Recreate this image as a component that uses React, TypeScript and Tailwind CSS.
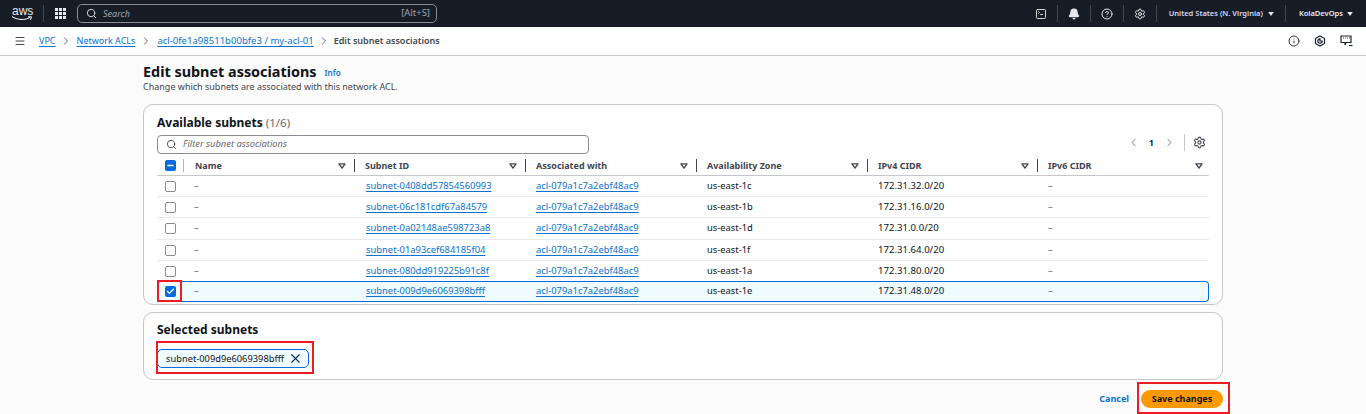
import React from "react";
import { Search, Bell, Settings, CircleHelp, SquareTerminal, Menu, ChevronRight, ChevronLeft, Info, X, Check, Minus } from "lucide-react";

const rows = [
  ["subnet-0408dd57854560993", "us-east-1c", "172.31.32.0/20"],
  ["subnet-06c181cdf67a84579", "us-east-1b", "172.31.16.0/20"],
  ["subnet-0a02148ae598723a8", "us-east-1d", "172.31.0.0/20"],
  ["subnet-01a93cef684185f04", "us-east-1f", "172.31.64.0/20"],
  ["subnet-080dd919225b91c8f", "us-east-1a", "172.31.80.0/20"],
  ["subnet-009d9e6069398bfff", "us-east-1e", "172.31.48.0/20"],
];
const heads = ["Name", "Subnet ID", "Associated with", "Availability Zone", "IPv4 CIDR", "IPv6 CIDR"];
const GRID = "grid grid-cols-[28px_170px_171px_171px_171px_170px_171px]";

const Caret = ({ c = "#424650" }: { c?: string }) => (
  <svg width="8" height="6" viewBox="0 0 9 7"><path d="M1 1h7L4.500 6z" fill="none" stroke={c} strokeWidth="1.600" strokeLinejoin="round" /></svg>
);
const Solid = () => (
  <svg width="6" height="4" viewBox="0 0 7 5"><path d="M0 0h7L3.500 5z" fill="#e8e9ec" /></svg>
);
const TopSep = () => <div className="w-px h-[17px] bg-[#424650]" />;
const Lnk = ({ children }: { children: React.ReactNode }) => (
  <span className="text-[#0972d3] underline underline-offset-2 decoration-1">{children}</span>
);

function Cb({ state }: { state?: "on" | "mixed" }) {
  if (!state) return <div className="w-[11px] h-[11px] rounded-[2px] border border-[#8c8c94] bg-white" />;
  return (
    <div className="w-[11px] h-[11px] rounded-[2px] bg-[#006ce0] flex items-center justify-center">
      {state === "on" ? <Check size={9} strokeWidth={3.500} color="#fff" /> : <Minus size={9} strokeWidth={3.500} color="#fff" />}
    </div>
  );
}

export default function App() {
  return (
    <div className="relative w-[1366px] h-[414px] overflow-hidden bg-[#fbfbfb] text-[#0f141a] text-[9px] font-['Noto_Sans',sans-serif]">
      <header className="h-[27px] bg-[#161d26] flex items-center text-[#e8e9ec]">
        <div className="w-[43px] pl-[11px] flex flex-col items-start leading-none">
          <span className="text-[12px] font-medium leading-[10px] font-['Liberation_Sans',sans-serif] pl-px">aws</span>
          <svg width="22" height="5" viewBox="0 0 22 5"><path d="M1 0.500C6 4 14 4.500 19 1.500M17 0.800L20.500 0.800L19.500 3.800" fill="none" stroke="#fff" strokeWidth="1" /></svg>
        </div>
        <div className="w-px h-[17px] bg-[#424650]" />
        <div className="ml-[11px] grid grid-cols-3 gap-px w-[11px]">
          {Array.from({ length: 9 }).map((_, i) => <div key={i} className="w-[3px] h-[3px] bg-[#e8e9ec]" />)}
        </div>
        <div className="ml-[11px] w-[360px] h-[19px] rounded-[5px] border border-[#8c8c94] flex items-center pl-[8px] pr-[6px]">
          <Search size={11} strokeWidth={2} color="#e8e9ec" />
          <span className="ml-[6px] italic text-[#a4a4ad]">Search</span>
          <span className="ml-auto text-[#a4a4ad] text-[9.500px]">[Alt+S]</span>
        </div>
        <div className="ml-auto flex items-center">
          <SquareTerminal size={12} strokeWidth={1.800} />
          <div className="mx-[10px]"><TopSep /></div>
          <Bell size={12} strokeWidth={2.500} fill="#e8e9ec" />
          <div className="mx-[10px]"><TopSep /></div>
          <CircleHelp size={12} strokeWidth={2} />
          <div className="mx-[10px]"><TopSep /></div>
          <Settings size={12} strokeWidth={2} />
          <div className="ml-[10px] mr-[12px]"><TopSep /></div>
          <span className="text-[7.500px] font-semibold text-[#d5dbf5]">United States (N. Virginia)</span>
          <span className="ml-[5px] mr-[11px]"><Solid /></span>
          <TopSep />
          <span className="ml-[13px] text-[7.500px] font-semibold">KolaDevOps</span>
          <span className="ml-[4px] mr-[13px]"><Solid /></span>
        </div>
      </header>

      <nav className="h-[29px] bg-white border-b border-[#c6c6cd] flex items-center">
        <div className="ml-[14px] w-[11px]"><Menu size={12} strokeWidth={2} color="#424650" /></div>
        <div className="ml-[14px] flex items-center font-normal">
          <Lnk>VPC</Lnk>
          <ChevronRight size={12} className="mx-[4.500px]" color="#656871" />
          <Lnk>Network ACLs</Lnk>
          <ChevronRight size={12} className="mx-[5px]" color="#656871" />
          <span className="text-[9.550px]"><Lnk>acl-0fe1a98511b00bfe3 / my-acl-01</Lnk></span>
          <ChevronRight size={12} className="mx-[4px]" color="#656871" />
          <span className="font-semibold text-[#424650]">Edit subnet associations</span>
        </div>
        <div className="ml-auto flex items-center gap-[14px] mr-[13px] text-[#1b232d]">
          <Info size={12} strokeWidth={1.800} />
          <svg width="12" height="12" viewBox="0 0 12 12" fill="none" stroke="#1b232d" strokeWidth="1.200"><path d="M6 1l4.500 2.500v5L6 11 1.500 8.500v-5z" /><path d="M6 3.800a2.200 2.200 0 1 0 2.200 2.200H6z" /></svg>
          <svg width="13" height="12" viewBox="0 0 13 12" fill="none" stroke="#1b232d" strokeWidth="1.200"><path d="M1 1h10v6.500H6L5 10V7.500H1z" /><path d="M3 3h.800M5 3h.800M7 3h.800M9 3h.800" /><path d="M9 10.500h3.500" /></svg>
        </div>
      </nav>

      <main className="w-[1080px] ml-[143px]">
        <div className="pt-[6px] flex items-center h-[26px]">
          <h1 className="text-[14.400px] font-bold leading-[20px]">Edit subnet associations</h1>
          <span className="ml-[8px] mt-[2px] text-[#0972d3] text-[8px] font-semibold">Info</span>
        </div>
        <p className="text-[#424650] leading-[12px] mt-[-1px]">Change which subnets are associated with this network ACL.</p>

        <section className="mt-[11px] h-[201px] rounded-[10px] border border-[#c6c6cd] bg-white px-[13px]">
          <div className="pt-[7px] h-[29px] flex items-center">
            <h2 className="text-[12px] font-bold">Available subnets</h2>
            <span className="ml-[3px] text-[11.500px] text-[#656871]">(1/6)</span>
          </div>
          <div className="flex items-center h-[20px]">
            <div className="w-[432px] h-[19px] rounded-[4px] border border-[#8c8c94] flex items-center px-[8px] bg-white">
              <Search size={11} strokeWidth={2} color="#424650" />
              <span className="ml-[6px] italic text-[#656871] text-[9.300px]">Filter subnet associations</span>
            </div>
            <div className="ml-auto flex items-center text-[#b4b4bb] mr-[3px] mt-[-3px]">
              <ChevronLeft size={13} />
              <span className="mx-[9px] text-[#033160] font-bold">1</span>
              <ChevronRight size={13} />
              <div className="w-px h-[17px] bg-[#c6c6cd] mx-[8px]" />
              <Settings size={13} strokeWidth={2} color="#424650" />
            </div>
          </div>
          <div className={`${GRID} h-[22px] pt-[2px] items-center border-b border-[#c6c6cd] w-[1052px]`}>
            <div className="flex items-center justify-between pl-[8px] h-full">
              <Cb state="mixed" />
              <div className="w-px h-[13px] bg-[#b4b4bb] mr-px" />
            </div>
            {heads.map((h, i) => (
              <div key={h} className={`h-full flex items-center pl-[10px] font-bold text-[#424650] ${i === 5 ? "pr-[6px]" : "pr-[9px]"}`}>
                <span>{h}</span>
                <span className={`ml-auto flex ${i > 0 && i < 5 ? "mr-px" : ""}`}><Caret /></span>
                {i < 5 && <div className={`w-px h-[13px] bg-[#424650] mr-[-9px] ${i > 0 ? "ml-[7px]" : "ml-[8px]"}`} />}
              </div>
            ))}
          </div>
          {rows.map((r, i) => {
            const sel = i === 5;
            return (
              <div key={r[0]} className={`${GRID} w-[1052px] ${i === 2 ? "h-[22px]" : "h-[21px]"} items-center text-[9.400px] ${sel ? "bg-[#f0fbff] ring-1 ring-inset ring-[#006ce0] rounded-[4px] mt-[-1px]" : i === 4 ? "" : "border-b border-[#e8e9ec]"}`}>
                <div className="pl-[8px]"><Cb state={sel ? "on" : undefined} /></div>
                <div className="pl-[9px] text-[#656871]">–</div>
                <div className="pl-[11px]"><Lnk>{r[0]}</Lnk></div>
                <div className="pl-[10px]"><Lnk>acl-079a1c7a2ebf48ac9</Lnk></div>
                <div className="pl-[10px]">{r[1]}</div>
                <div className="pl-[10px] text-[9.600px]">{r[2]}</div>
                <div className="pl-[10px] text-[#656871]">–</div>
              </div>
            );
          })}
        </section>

        <section className="mt-[7px] h-[68px] rounded-[10px] border border-[#c6c6cd] bg-white px-[13px]">
          <h2 className="pt-[8px] text-[12px] font-bold leading-[18px] box-content">Selected subnets</h2>
          <div className="mt-[10px] w-[152px] h-[19px] rounded-[5px] border border-[#006ce0] bg-[#f0fbff] flex items-center pl-[8px] pr-[5px] text-[9.300px]">
            <span>subnet-009d9e6069398bfff</span>
            <X size={15} strokeWidth={1.800} color="#033160" className="ml-auto" />
          </div>
        </section>

        <div className="mt-[10px] flex justify-end items-center">
          <span className="text-[#0972d3] font-bold">Cancel</span>
          <button className="ml-[12px] w-[82px] h-[18px] rounded-full bg-[#ff9900] font-bold text-[#0f141a] flex items-center justify-center">Save changes</button>
        </div>
      </main>

      <div className="absolute left-[157px] top-[280px] w-[25px] h-[22px] border-2 border-[#ed1c24]" />
      <div className="absolute left-[156px] top-[341px] w-[158px] h-[33px] border-2 border-[#ed1c24]" />
      <div className="absolute left-[1137px] top-[382px] w-[93px] h-[32px] border-2 border-[#ed1c24]" />
    </div>
  );
}
